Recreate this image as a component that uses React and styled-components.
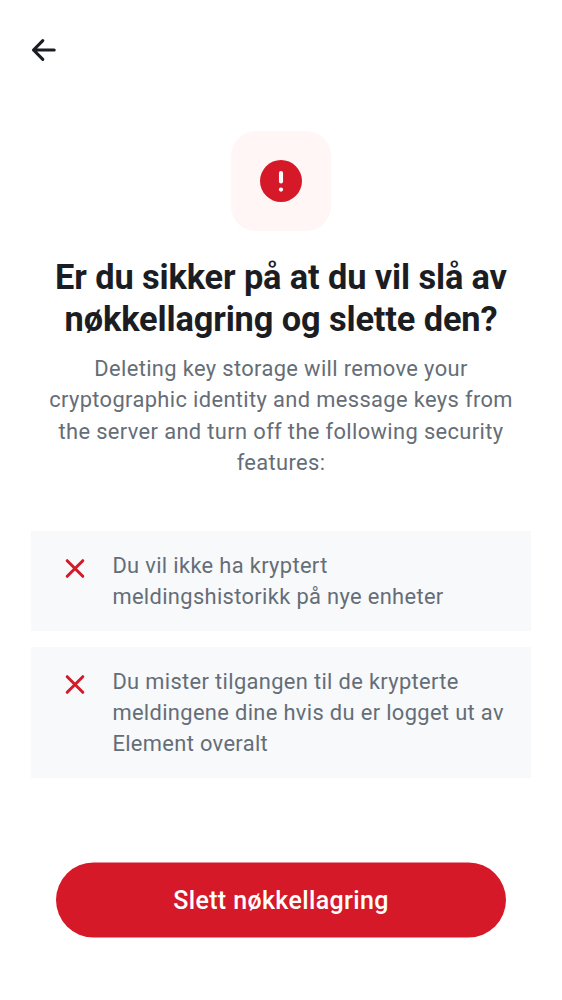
import React from 'react';
import styled, { createGlobalStyle } from 'styled-components';

const GlobalStyle = createGlobalStyle`
  * { box-sizing: border-box; }
  body { margin: 0; background: #fff; font-family: Roboto, sans-serif; }
`;

const Screen = styled.main`
  display: flex;
  flex-direction: column;
  height: 1000px;
  width: 562px;
  padding: 0 31px 63px;
  background: #fff;
`;

const TopBar = styled.header`
  height: 100px;
  display: flex;
  align-items: center;
`;

const BackButton = styled.button`
  display: flex;
  padding: 0;
  border: 0;
  background: none;
`;

const Hero = styled.section`
  display: flex;
  flex-direction: column;
  align-items: center;
  padding-top: 31px;
`;

const IconTile = styled.div`
  display: flex;
  align-items: center;
  justify-content: center;
  width: 100px;
  height: 100px;
  border-radius: 25px;
  background: #fff6f5;
`;

const Title = styled.h1`
  margin: 25px 0 0;
  color: #1b1d22;
  font-size: 34.375px;
  font-weight: 700;
  line-height: 42px;
  letter-spacing: -0.12px;
  text-align: center;
  white-space: nowrap;
`;

const Description = styled.p`
  margin: 13px 0 0;
  color: #656d77;
  font-size: 21.875px;
  line-height: 31.25px;
  letter-spacing: 0.37px;
  text-align: center;
  white-space: nowrap;
`;

const FeatureList = styled.ul`
  display: flex;
  flex-direction: column;
  gap: 16px;
  margin: 53px 0 0;
  padding: 0;
  list-style: none;
`;

const Feature = styled.li`
  display: flex;
  align-items: flex-start;
  gap: 22.4px;
  padding: 19px 0 18.4px 29px;
  background: #f7f9fb;
  svg { flex: none; margin-top: 3px; }
`;

const FeatureText = styled.span`
  color: #656d77;
  font-size: 21.875px;
  line-height: 31.25px;
  letter-spacing: 0.35px;
  white-space: nowrap;
`;

const DeleteButton = styled.button`
  height: 75px;
  margin: auto 25px 0;
  border: 0;
  border-radius: 38px;
  background: #d51928;
  color: #fff;
  font: 500 25px/37.5px Roboto, sans-serif;
  letter-spacing: 0.36px;
  transform: translateY(0.5px);
`;

const Cross = () => (
  <svg width="30" height="30" viewBox="0 0 30 30" fill="none" stroke="#d51928" strokeWidth="3" strokeLinecap="round">
    <path d="M7.2 7.7l15.6 15.6M22.8 7.7L7.2 23.3" />
  </svg>
);

const features = [
  ['Du vil ikke ha kryptert', 'meldingshistorikk på nye enheter'],
  ['Du mister tilgangen til de krypterte', 'meldingene dine hvis du er logget ut av', 'Element overalt'],
];

const Lines = ({ items }) =>
  items.map((line, i) => (
    <React.Fragment key={line}>
      {i > 0 && <br />}
      {line}
    </React.Fragment>
  ));

export default function App() {
  return (
    <>
      <GlobalStyle />
      <Screen>
        <TopBar>
          <BackButton aria-label="Tilbake">
            <svg width="25" height="25" viewBox="0 0 25 25" fill="none" stroke="#1b1d22" strokeWidth="3.1" strokeLinecap="round" strokeLinejoin="round">
              <path d="M11.8 2.6L2.5 12L11.8 21.4M2.5 12H23.2" />
            </svg>
          </BackButton>
        </TopBar>
        <Hero>
          <IconTile>
            <svg width="42" height="42" viewBox="0 0 42 42">
              <circle cx="21" cy="21" r="21" fill="#d51928" />
              <path d="M21 13v8.4" stroke="#fff" strokeWidth="4.1" strokeLinecap="round" />
              <circle cx="21" cy="29.6" r="2.1" fill="#fff" />
            </svg>
          </IconTile>
          <Title>
            <Lines items={['Er du sikker på at du vil slå av', 'nøkkellagring og slette den?']} />
          </Title>
          <Description>
            <Lines
              items={[
                'Deleting key storage will remove your',
                'cryptographic identity and message keys from',
                'the server and turn off the following security',
                'features:',
              ]}
            />
          </Description>
        </Hero>
        <FeatureList>
          {features.map((lines) => (
            <Feature key={lines[0]}>
              <Cross />
              <FeatureText><Lines items={lines} /></FeatureText>
            </Feature>
          ))}
        </FeatureList>
        <DeleteButton>Slett nøkkellagring</DeleteButton>
      </Screen>
    </>
  );
}
